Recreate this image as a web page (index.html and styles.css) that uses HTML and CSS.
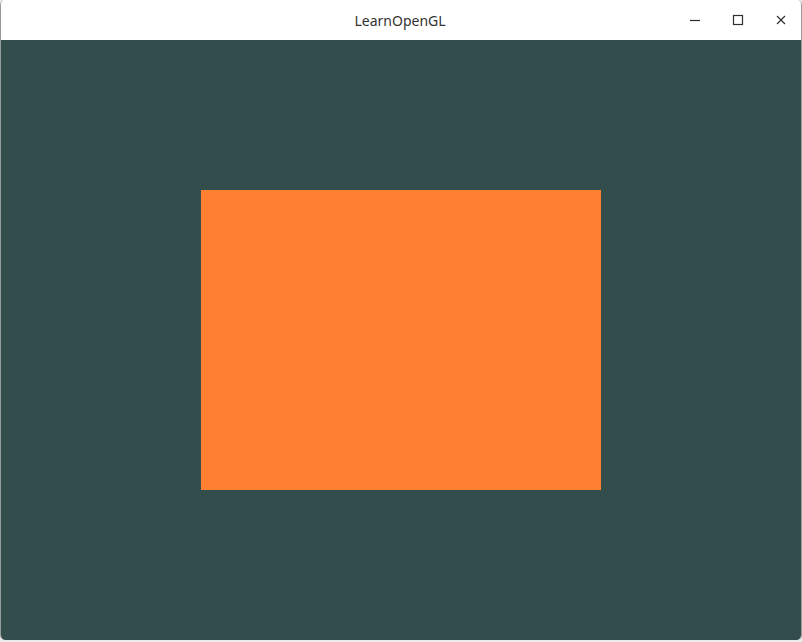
FILE: index.html
```html
<!DOCTYPE html>
<html>
<head>
<meta charset="utf-8">
<link rel="stylesheet" href="styles.css">
<title>LearnOpenGL</title>
</head>
<body>
<div class="window">
  <div class="titlebar">
    <div class="title">LearnOpenGL</div>
    <div class="controls">
      <svg class="ctl" width="12" height="12" viewBox="0 0 12 12"><path d="M1 6.5H11" stroke="#2d2d2d" stroke-width="1.2" fill="none"/></svg>
      <svg class="ctl" width="12" height="12" viewBox="0 0 12 12"><rect x="1.5" y="1.5" width="9" height="9" stroke="#2d2d2d" stroke-width="1.2" fill="none"/></svg>
      <svg class="ctl" width="12" height="12" viewBox="0 0 12 12"><path d="M2 2L10 10M10 2L2 10" stroke="#2d2d2d" stroke-width="1.1" fill="none"/></svg>
    </div>
  </div>
  <div class="canvas">
    <div class="quad"></div>
  </div>
</div>
</body>
</html>
```
FILE: styles.css
```css
html, body {
  margin: 0;
  padding: 0;
  background: #ececec;
  width: 802px;
  height: 642px;
  overflow: hidden;
}
.window {
  width: 800px;
  border-left: 1px solid #9a9a9a;
  border-right: 1px solid #9a9a9a;
  border-radius: 5px 5px 5px 5px;
  overflow: hidden;
  background: #ffffff;
}
.titlebar {
  height: 40px;
  display: flex;
  align-items: center;
  justify-content: center;
  position: relative;
  background: #ffffff;
}
.title {
  font-family: "Noto Sans", "Open Sans", sans-serif;
  font-size: 14px;
  color: #333333;
  margin-left: -2px;
}
.controls {
  position: absolute;
  right: 14px;
  top: 14px;
  display: flex;
  gap: 31px;
}
.ctl {
  display: block;
}
.canvas {
  height: 600px;
  background: #334d4d;
  display: flex;
  align-items: center;
  justify-content: center;
}
.quad {
  width: 400px;
  height: 300px;
  background: #ff7f33;
}
```
